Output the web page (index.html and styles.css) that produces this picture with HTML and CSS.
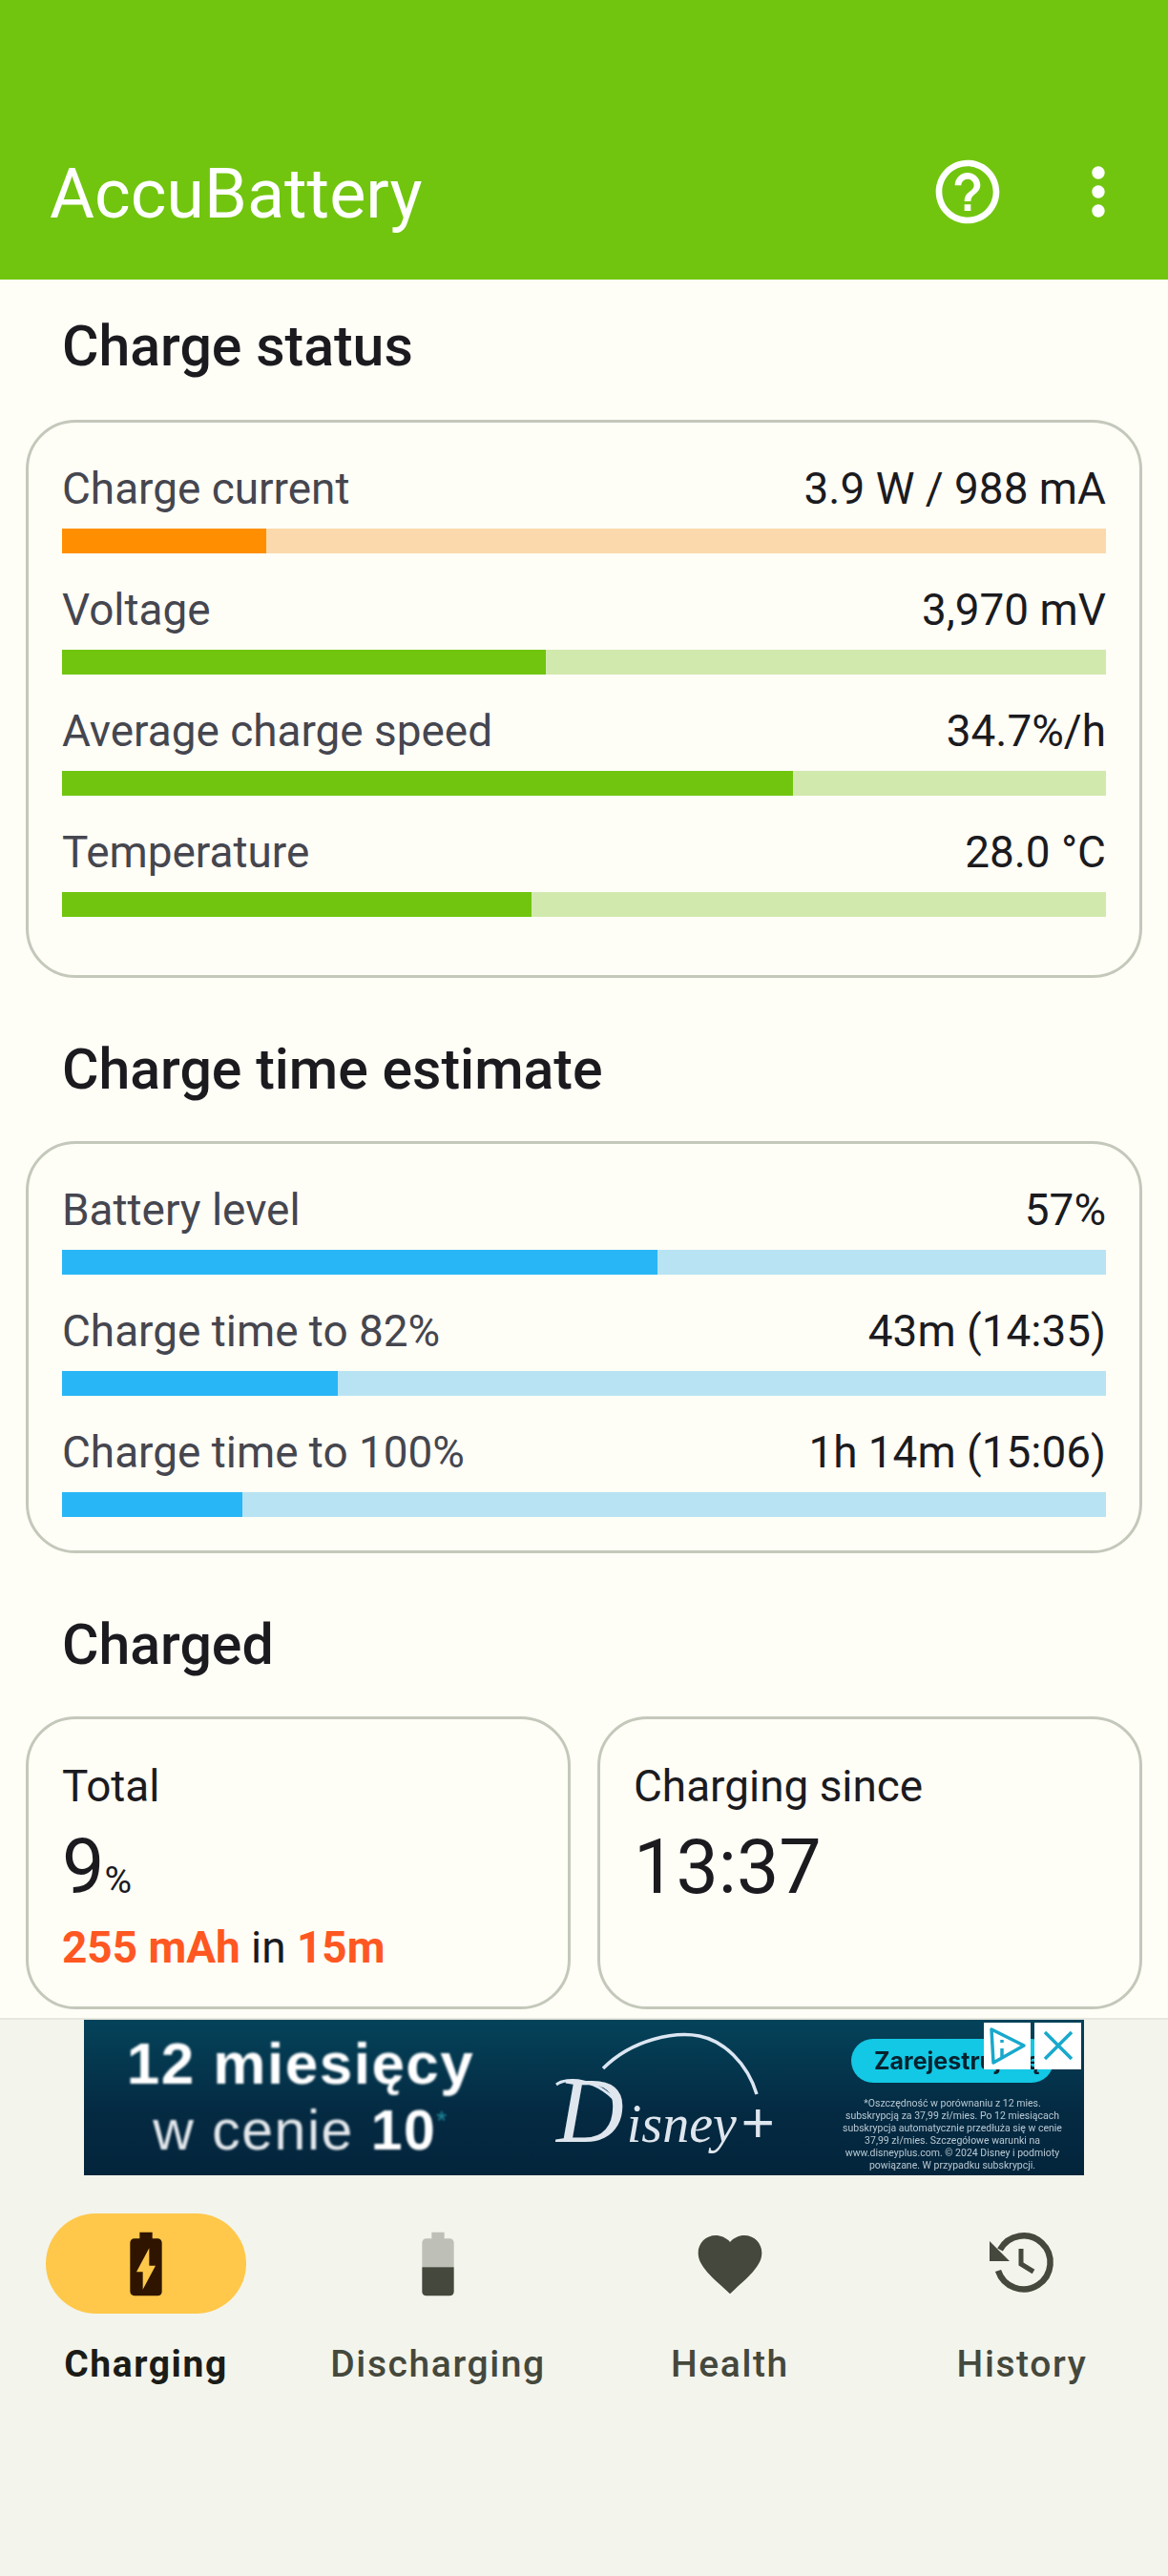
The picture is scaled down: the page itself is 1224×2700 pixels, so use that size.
FILE: index.html
```html
<!DOCTYPE html>
<html lang="en">
<head>
    <meta charset="UTF-8">
    <title>AccuBattery</title>
    <link rel="stylesheet" href="styles.css">
</head>
<body>
    <header class="appbar">
        <span class="appbar-title">AccuBattery</span>
        <svg class="appbar-icon help" viewBox="0 0 24 24"><path d="M11 18h2v-2h-2v2zm1-16C6.480 2 2 6.480 2 12s4.480 10 10 10 10-4.480 10-10S17.520 2 12 2zm0 18c-4.410 0-8-3.590-8-8s3.590-8 8-8 8 3.590 8 8-3.590 8-8 8zm0-14c-2.210 0-4 1.790-4 4h2c0-1.100.9-2 2-2s2 .9 2 2c0 2-3 1.750-3 5h2c0-2.250 3-2.500 3-5 0-2.210-1.790-4-4-4z"/></svg>
        <svg class="appbar-icon more" viewBox="0 0 24 24"><path d="M12 8c1.100 0 2-.9 2-2s-.9-2-2-2-2 .9-2 2 .9 2 2 2zm0 2c-1.100 0-2 .9-2 2s.9 2 2 2 2-.9 2-2-.9-2-2-2zm0 6c-1.100 0-2 .9-2 2s.9 2 2 2 2-.9 2-2-.9-2-2-2z"/></svg>
    </header>

    <main class="content">
        <h2 class="section-title first">Charge status</h2>
        <section class="card bars">
            <div class="stat">
                <div class="stat-row"><span>Charge current</span><span class="stat-value">3.9 W / 988 mA</span></div>
                <div class="track orange"><div class="fill" style="width: 19.6%"></div></div>
            </div>
            <div class="stat">
                <div class="stat-row"><span>Voltage</span><span class="stat-value">3,970 mV</span></div>
                <div class="track green"><div class="fill" style="width: 46.3%"></div></div>
            </div>
            <div class="stat">
                <div class="stat-row"><span>Average charge speed</span><span class="stat-value">34.7%/h</span></div>
                <div class="track green"><div class="fill" style="width: 70%"></div></div>
            </div>
            <div class="stat">
                <div class="stat-row"><span>Temperature</span><span class="stat-value">28.0 °C</span></div>
                <div class="track green"><div class="fill" style="width: 45%"></div></div>
            </div>
        </section>

        <h2 class="section-title">Charge time estimate</h2>
        <section class="card bars short">
            <div class="stat">
                <div class="stat-row"><span>Battery level</span><span class="stat-value">57%</span></div>
                <div class="track blue"><div class="fill" style="width: 57%"></div></div>
            </div>
            <div class="stat">
                <div class="stat-row"><span>Charge time to 82%</span><span class="stat-value">43m (14:35)</span></div>
                <div class="track blue"><div class="fill" style="width: 26.4%"></div></div>
            </div>
            <div class="stat">
                <div class="stat-row"><span>Charge time to 100%</span><span class="stat-value">1h 14m (15:06)</span></div>
                <div class="track blue"><div class="fill" style="width: 17.3%"></div></div>
            </div>
        </section>

        <h2 class="section-title">Charged</h2>
        <div class="summary">
            <section class="card tile">
                <div class="tile-label">Total</div>
                <div class="tile-number">9<span class="tile-unit">%</span></div>
                <div class="tile-note"><b>255 mAh</b> in <b>15m</b></div>
            </section>
            <section class="card tile">
                <div class="tile-label">Charging since</div>
                <div class="tile-number">13:37</div>
            </section>
        </div>
    </main>

    <div class="bottom">
        <div class="ad">
            <div class="ad-offer">
                <div class="ad-line1">12 miesięcy</div>
                <div class="ad-line2">w cenie <b>10</b><sup>*</sup></div>
            </div>
            <div class="ad-logo">
                <svg class="ad-arc" viewBox="0 0 260 163">
                    <path d="M64 51C95 20 140 12 165 17S215 45 225 78" fill="none" stroke="#dbe6f2" stroke-width="3.500"/>
                    <path d="M15 68C25 60 59 60 82 91" fill="none" stroke="#dbe6f2" stroke-width="3"/>
                </svg>
                <div class="ad-brand"><span class="ad-brand-d">D</span><span class="ad-brand-rest">isney</span><span class="ad-brand-plus">+</span></div>
            </div>
            <div class="ad-side">
                <div class="ad-button">Zarejestruj się</div>
                <p class="ad-terms">*Oszczędność w porównaniu z 12 mies.<br>subskrypcją za 37,99 zł/mies. Po 12 miesiącach<br>subskrypcja automatycznie przedłuża się w cenie<br>37,99 zł/mies. Szczegółowe warunki na<br>www.disneyplus.com. © 2024 Disney i podmioty<br>powiązane. W przypadku subskrypcji.</p>
            </div>
            <div class="ad-choice">
                <span class="ad-box"><svg viewBox="0 0 49 49"><path d="M8 7L42 24L10 42Z" fill="none" stroke="#18a9cc" stroke-width="3.500" stroke-linejoin="round"/><path d="M19 27V37M19 18V21" fill="none" stroke="#18a9cc" stroke-width="3.500"/></svg></span>
                <span class="ad-box"><svg viewBox="0 0 49 49"><path d="M11 10L39 38M39 10L11 38" fill="none" stroke="#18a9cc" stroke-width="3.500"/></svg></span>
            </div>
        </div>
        <nav class="tabs">
            <div class="tab active">
                <div class="tab-pill"><svg viewBox="0 0 24 24"><path d="M15.670 4H14V2h-4v2H8.330C7.600 4 7 4.600 7 5.330v15.330C7 21.400 7.600 22 8.330 22h7.330c.74 0 1.340-.6 1.340-1.330V5.330C17 4.600 16.400 4 15.670 4zM11 20v-5.500H9L13 7v5.500h2L11 20z"/></svg></div>
                <span class="tab-label">Charging</span>
            </div>
            <div class="tab">
                <div class="tab-pill"><svg viewBox="0 0 24 24"><path opacity=".3" d="M17 5.330C17 4.600 16.400 4 15.670 4H14V2h-4v2H8.330C7.600 4 7 4.600 7 5.330V13h10V5.330z"/><path d="M7 13v7.670C7 21.400 7.600 22 8.330 22h7.330c.74 0 1.340-.6 1.340-1.330V13H7z"/></svg></div>
                <span class="tab-label">Discharging</span>
            </div>
            <div class="tab">
                <div class="tab-pill"><svg viewBox="0 0 24 24"><path d="M12 21.350l-1.450-1.320C5.400 15.360 2 12.280 2 8.500 2 5.420 4.420 3 7.500 3c1.740 0 3.410.81 4.500 2.090C13.090 3.810 14.760 3 16.500 3 19.580 3 22 5.420 22 8.500c0 3.780-3.400 6.860-8.550 11.540L12 21.350z"/></svg></div>
                <span class="tab-label">Health</span>
            </div>
            <div class="tab">
                <div class="tab-pill"><svg viewBox="0 0 80 80"><path d="M15 47A28 28 0 1 0 17 25" fill="none" stroke="#45483c" stroke-width="6.500"/><path d="M6 16L27 37H6Z"/><path d="M39 24V40L52 48" fill="none" stroke="#45483c" stroke-width="5"/></svg></div>
                <span class="tab-label">History</span>
            </div>
        </nav>
    </div>
</body>
</html>
```

FILE: styles.css
```css
* {
    box-sizing: border-box;
}

body {
    margin: 0;
    height: 2700px;
    display: flex;
    flex-direction: column;
    font-family: 'Roboto', sans-serif;
    background-color: #fefdf6;
    color: #1b1b1f;
}

.appbar {
    height: 293px;
    background-color: #71c50f;
    display: flex;
    align-items: flex-end;
    padding: 0 33px 52px 52px;
    color: #ffffff;
}

.appbar-title {
    font-size: 72px;
    line-height: 74px;
    flex: 1;
}

.appbar-icon {
    width: 80px;
    height: 80px;
    fill: #ffffff;
}

.help {
    margin-right: 57px;
}

.content {
    height: 1822px;
    padding: 0 27px;
}

.section-title {
    margin: 0;
    font-size: 59px;
    line-height: 76px;
    font-weight: 500;
    padding: 58px 38px 37px;
}

.section-title.first {
    padding-top: 32px;
    padding-bottom: 39px;
}

.card {
    border: 3px solid #c4c8bb;
    border-radius: 52px;
    padding: 34px 35px;
}

.bars {
    height: 585px;
}

.bars.short {
    height: 432px;
}

.stat {
    margin-bottom: 24px;
}

.stat-row {
    display: flex;
    justify-content: space-between;
    font-size: 45.9px;
    line-height: 70px;
    color: #45464f;
    margin-bottom: 7px;
}

.stat-value {
    color: #1b1b1f;
}

.track {
    height: 26px;
}

.fill {
    height: 100%;
}

.orange { background-color: #fbd9ac; }
.orange .fill { background-color: #ff8f00; }
.green { background-color: #d2e9ae; }
.green .fill { background-color: #71c50f; }
.blue { background-color: #b8e3f3; }
.blue .fill { background-color: #29b6f6; }

.summary {
    display: flex;
    gap: 28px;
}

.tile {
    flex: 1;
    height: 307px;
    padding-top: 35px;
}

.tile-label {
    font-size: 45.9px;
    line-height: 70px;
    margin-bottom: 7px;
}

.tile-number {
    font-size: 79px;
    line-height: 86px;
}

.tile-unit {
    font-size: 39px;
}

.tile-note {
    font-size: 45.9px;
    line-height: 54px;
}

.tile-note b {
    color: #ff5722;
    font-weight: 700;
}

.bottom {
    flex: 1;
    background-color: #f3f4ec;
    border-top: 2px solid #e6e7df;
}

.ad {
    position: relative;
    width: 1048px;
    height: 163px;
    margin: 0 auto;
    display: flex;
    color: #ffffff;
    overflow: hidden;
    background: linear-gradient(180deg, #04435a 0%, #042a42 60%, #03253c 100%);
}

.ad-offer {
    flex: none;
    width: 454px;
    padding-top: 11px;
    text-align: center;
    font-family: 'Liberation Sans', sans-serif;
    filter: blur(0.9px);
}

.ad-line1 {
    font-size: 62px;
    line-height: 70px;
    font-weight: 700;
    letter-spacing: 1.5px;
}

.ad-line2 {
    font-size: 59px;
    line-height: 70px;
    letter-spacing: 1.5px;
    color: #e4e8ec;
}

.ad-line2 b {
    color: #ffffff;
}

.ad-line2 sup {
    font-size: 28px;
    color: #1f8c9e;
    line-height: 0;
}

.ad-logo {
    position: relative;
    flex: none;
    width: 260px;
    margin-left: 26px;
    filter: blur(0.7px);
}

.ad-arc {
    position: absolute;
    top: 0;
    left: 0;
    width: 260px;
    height: 163px;
}

.ad-brand {
    position: absolute;
    top: 46px;
    left: 15px;
    line-height: 98px;
    white-space: nowrap;
    color: #dfe6ee;
}

.ad-brand-d {
    font-family: 'Liberation Serif', serif;
    font-style: italic;
    font-size: 98px;
}

.ad-brand-rest {
    font-family: 'Liberation Serif', serif;
    font-style: italic;
    font-size: 56px;
    margin-left: 3px;
}

.ad-brand-plus {
    font-family: 'Liberation Sans', sans-serif;
    font-size: 60px;
    margin-left: 5px;
}

.ad-side {
    flex: none;
    width: 260px;
    margin-left: auto;
    margin-right: 8px;
    padding-top: 20px;
    text-align: center;
}

.ad-button {
    width: 212px;
    height: 46px;
    margin: 0 auto;
    padding-left: 8px;
    border-radius: 23px;
    background-color: #12c8e4;
    color: #06222f;
    font-family: 'Inter', sans-serif;
    font-size: 25px;
    font-weight: 700;
    line-height: 46px;
    text-align: left;
    text-indent: 16px;
    white-space: nowrap;
    overflow: hidden;
    filter: blur(0.7px);
}

.ad-terms {
    margin: 15px 0 0;
    font-size: 10.5px;
    line-height: 13px;
    white-space: nowrap;
    color: #b9c8d2;
    filter: blur(0.7px);
}

.ad-choice {
    position: absolute;
    top: 3px;
    right: 3px;
    display: flex;
    gap: 4px;
}

.ad-box {
    width: 49px;
    height: 49px;
    background-color: #ffffff;
}

.ad-box svg {
    display: block;
    width: 49px;
    height: 49px;
}

.tabs {
    display: flex;
    padding-top: 40px;
}

.tab {
    width: 306px;
    display: flex;
    flex-direction: column;
    align-items: center;
}

.tab-pill {
    width: 210px;
    height: 105px;
    border-radius: 53px;
    display: flex;
    align-items: center;
    justify-content: center;
}

.tab-pill svg {
    width: 80px;
    height: 80px;
    fill: #45483c;
}

.active .tab-pill {
    background-color: #ffc84a;
}

.active .tab-pill svg {
    fill: #2f1500;
}

.tab-label {
    margin-top: 30px;
    font-size: 39px;
    line-height: 46px;
    font-weight: 500;
    letter-spacing: 1.6px;
    color: #45483c;
}

.active .tab-label {
    font-weight: 700;
    color: #1b1c18;
}
```
